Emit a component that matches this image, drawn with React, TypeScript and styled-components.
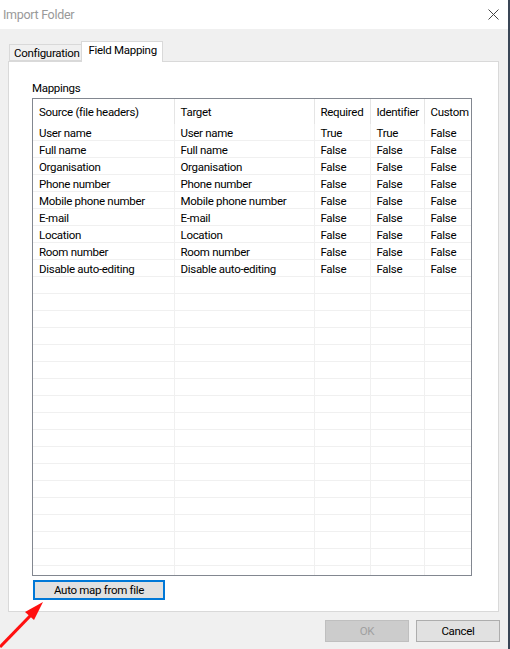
import React from "react";
import styled, { createGlobalStyle } from "styled-components";

const GlobalStyle = createGlobalStyle`
  html, body {
    margin: 0;
    padding: 0;
    background: #f0f0f0;
  }
  body {
    font-family: Roboto, "Liberation Sans", Arial, sans-serif;
    font-size: 11.5px;
    letter-spacing: -0.3px;
    color: #000;
  }
`;

const Window = styled.div`
  position: relative;
  width: 510px;
  height: 649px;
  box-sizing: border-box;
  background: #f0f0f0;
  border-right: 2px solid #3a4656;
  display: flex;
  flex-direction: column;
  overflow: hidden;
`;

const TitleBar = styled.div`
  height: 29px;
  background: #fff;
  display: flex;
  align-items: center;
  justify-content: space-between;
  padding: 0 9px 0 3px;
  flex-shrink: 0;
`;

const Title = styled.span`
  color: #999;
  font-size: 12.5px;
`;

const Body = styled.div`
  flex: 1;
  display: flex;
  flex-direction: column;
  padding: 12px 8px 0 8px;
`;

const TabStrip = styled.div`
  display: flex;
  align-items: flex-end;
  height: 20px;
  padding-left: 1px;
`;

const Tab = styled.div<{ $active?: boolean }>`
  box-sizing: border-box;
  height: ${(p) => (p.$active ? "21px" : "17px")};
  margin-bottom: ${(p) => (p.$active ? "-1px" : "0")};
  padding: ${(p) => (p.$active ? "1px 5px 0 6px" : "0 2px 0 4px")};
  border: 1px solid #d9d9d9;
  border-bottom: ${(p) => (p.$active ? "none" : "1px solid #d9d9d9")};
  background: ${(p) => (p.$active ? "#fff" : "#f0f0f0")};
  display: flex;
  align-items: ${(p) => (p.$active ? "flex-start" : "center")};
  position: relative;
  z-index: ${(p) => (p.$active ? 1 : 0)};
  & + & {
    margin-left: -1px;
  }
`;

const TabPanel = styled.div`
  box-sizing: border-box;
  width: 491px;
  height: 551px;
  background: #fff;
  border: 1px solid #d9d9d9;
  padding: 19px 0 0 23px;
  display: flex;
  flex-direction: column;
`;

const GroupLabel = styled.div`
  height: 17px;
  line-height: 15px;
`;

const Grid = styled.div`
  box-sizing: border-box;
  width: 440px;
  height: 478px;
  border: 1px solid #828790;
  overflow: hidden;
  background: #fff;
`;

const Table = styled.table`
  border-collapse: collapse;
  table-layout: fixed;
  width: 438px;
`;

const HeadCell = styled.th`
  height: 25px;
  padding: 0 0 0 6px;
  text-align: left;
  font-weight: normal;
  border-right: 1px solid #e5e5e5;
  white-space: nowrap;
  overflow: hidden;
`;

const Cell = styled.td`
  height: 14px;
  padding: 2px 0 0 6px;
  border-right: 1px solid #f0f0f0;
  border-bottom: 1px solid #f0f0f0;
  white-space: nowrap;
  overflow: hidden;
  line-height: 14px;
`;

const AutoMapButton = styled.button`
  margin-top: 4px;
  margin-left: 1px;
  width: 132px;
  height: 20px;
  box-sizing: border-box;
  background: #e1e1e1;
  border: 2px solid #0078d7;
  font: inherit;
  letter-spacing: inherit;
  color: #000;
  padding: 0;
`;

const Footer = styled.div`
  display: flex;
  justify-content: flex-end;
  gap: 7px;
  margin-top: 8px;
`;

const DialogButton = styled.button<{ $disabled?: boolean }>`
  width: 84px;
  height: 22px;
  box-sizing: border-box;
  font: inherit;
  letter-spacing: inherit;
  padding: 0;
  background: ${(p) => (p.$disabled ? "#cccccc" : "#e1e1e1")};
  border: 1px solid ${(p) => (p.$disabled ? "#bfbfbf" : "#adadad")};
  color: ${(p) => (p.$disabled ? "#a0a0a0" : "#000")};
`;

const Arrow = styled.svg`
  position: absolute;
  left: 0;
  top: 596px;
`;

const columns = [
  { name: "Source (file headers)", w: 141 },
  { name: "Target", w: 140 },
  { name: "Required", w: 56 },
  { name: "Identifier", w: 54 },
  { name: "Custom", w: 47 },
];

const rows = [
  ["User name", "User name", "True", "True", "False"],
  ["Full name", "Full name", "False", "False", "False"],
  ["Organisation", "Organisation", "False", "False", "False"],
  ["Phone number", "Phone number", "False", "False", "False"],
  ["Mobile phone number", "Mobile phone number", "False", "False", "False"],
  ["E-mail", "E-mail", "False", "False", "False"],
  ["Location", "Location", "False", "False", "False"],
  ["Room number", "Room number", "False", "False", "False"],
  ["Disable auto-editing", "Disable auto-editing", "False", "False", "False"],
];

const emptyRows = 18;

export default function App() {
  return (
    <Window>
      <GlobalStyle />
      <TitleBar>
        <Title>Import Folder</Title>
        <svg width="11" height="11" viewBox="0 0 11 11">
          <path d="M0.5 0.5 L10.5 10.5 M10.5 0.5 L0.5 10.5" stroke="#444" strokeWidth="1" />
        </svg>
      </TitleBar>
      <Body>
        <TabStrip>
          <Tab>Configuration</Tab>
          <Tab $active>Field Mapping</Tab>
        </TabStrip>
        <TabPanel>
          <GroupLabel>Mappings</GroupLabel>
          <Grid>
            <Table>
              <colgroup>
                {columns.map((c) => (
                  <col key={c.name} style={{ width: c.w }} />
                ))}
              </colgroup>
              <thead>
                <tr>
                  {columns.map((c) => (
                    <HeadCell key={c.name}>{c.name}</HeadCell>
                  ))}
                </tr>
              </thead>
              <tbody>
                {rows.map((r, i) => (
                  <tr key={i}>
                    {r.map((v, j) => (
                      <Cell key={j}>{v}</Cell>
                    ))}
                  </tr>
                ))}
                {Array.from({ length: emptyRows }).map((_, i) => (
                  <tr key={"e" + i}>
                    {columns.map((c) => (
                      <Cell key={c.name}>&nbsp;</Cell>
                    ))}
                  </tr>
                ))}
              </tbody>
            </Table>
          </Grid>
          <AutoMapButton>Auto map from file</AutoMapButton>
        </TabPanel>
        <Footer>
          <DialogButton $disabled>OK</DialogButton>
          <DialogButton>Cancel</DialogButton>
        </Footer>
      </Body>
      <Arrow width="50" height="53" viewBox="0 0 50 53">
        <path d="M0 51 L32 18" stroke="#ff1010" strokeWidth="3.2" />
        <path d="M43 6 L25 16 L34 24 Z" fill="#ff1010" />
      </Arrow>
    </Window>
  );
}
